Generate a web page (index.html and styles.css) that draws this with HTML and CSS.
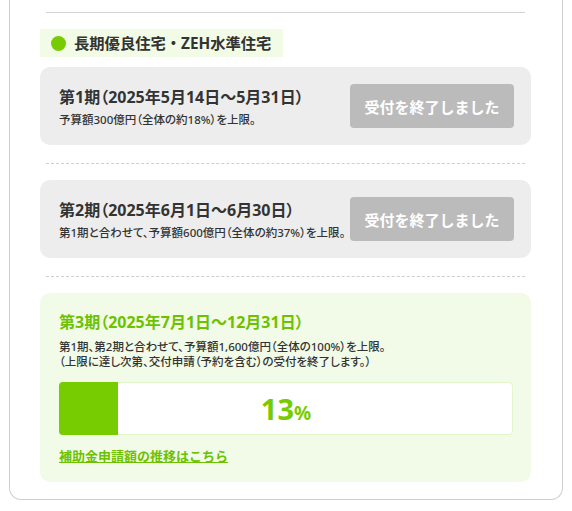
FILE: index.html
```html
<!DOCTYPE html>
<html lang="ja">
<head>
    <meta charset="UTF-8">
    <meta name="viewport" content="width=device-width, initial-scale=1.0">
    <title>補助金 受付状況</title>
    <link rel="stylesheet" href="styles.css">
</head>

<body>
    <div class="page">
        <div class="panel">
            <hr class="rule">

            <div class="label">
                <span class="dot"></span>
                <h2 class="label-text">長期優良住宅・ZEH水準住宅</h2>
            </div>

            <div class="period closed">
                <div class="period-info">
                    <h3 class="period-title">第1期（2025年5月14日〜5月31日）</h3>
                    <p class="period-note">予算額300億円（全体の約18%）を上限。</p>
                </div>
                <span class="status">受付を終了しました</span>
            </div>

            <hr class="dash">

            <div class="period closed">
                <div class="period-info">
                    <h3 class="period-title">第2期（2025年6月1日〜6月30日）</h3>
                    <p class="period-note">第1期と合わせて、予算額600億円（全体の約37%）を上限。</p>
                </div>
                <span class="status">受付を終了しました</span>
            </div>

            <hr class="dash">

            <div class="period current">
                <h3 class="period-title">第3期（2025年7月1日〜12月31日）</h3>
                <p class="period-note">第1期、第2期と合わせて、予算額1,600億円（全体の100%）を上限。<br>（上限に達し次第、交付申請（予約を含む）の受付を終了します。）</p>

                <div class="bar">
                    <div class="bar-fill" style="width: 13%;"></div>
                    <span class="bar-value">13<small>%</small></span>
                </div>

                <a class="more" href="#">補助金申請額の推移はこちら</a>
            </div>
        </div>
    </div>
</body>
</html>
```

FILE: styles.css
```css
body {
    margin: 0;
    background-color: #fff;
    font-family: "Noto Sans", "Noto Sans CJK JP", sans-serif;
    color: #333;
}

.page {
    padding: 0 9px;
}

.panel {
    border: 1px solid #cfcfcf;
    border-top: none;
    border-radius: 0 0 12px 12px;
    padding: 12px 31px 17px 30px;
}

.rule {
    margin: 0 6px;
    border: none;
    border-top: 1px solid #d3d3d3;
}

.label {
    display: inline-flex;
    align-items: center;
    height: 28px;
    margin-top: 16px;
    padding: 0 12px 0 11px;
    background-color: #f2fbe6;
}

.dot {
    width: 15px;
    height: 15px;
    border-radius: 50%;
    background-color: #76cc00;
    margin-right: 8px;
}

.label-text {
    margin: 0;
    font-size: 15.3px;
    font-weight: 700;
    line-height: 22px;
}

.period {
    border-radius: 10px;
}

.closed {
    display: flex;
    align-items: center;
    justify-content: space-between;
    height: 78px;
    padding: 0 17px 0 19px;
    background-color: #ededed;
}

.label + .closed {
    margin-top: 10px;
}

.period-info {
    white-space: nowrap;
}

.period-title {
    margin: 0;
    font-size: 16px;
    font-weight: 700;
    line-height: 22px;
    font-feature-settings: "palt";
}

.period-note {
    margin: 4px 0 0;
    font-size: 11.5px;
    font-weight: 500;
    line-height: 15px;
    font-feature-settings: "palt";
}

.status {
    flex-shrink: 0;
    width: 164px;
    height: 44px;
    display: flex;
    align-items: center;
    justify-content: center;
    background-color: #bbb;
    border-radius: 4px;
    color: #fff;
    font-size: 15px;
    font-weight: 700;
}

.dash {
    margin: 18px 6px 16px;
    border: none;
    border-top: 1px dashed #cfcfcf;
}

.current {
    padding: 18px 18px 16px 19px;
    background-color: #f2fbe7;
}

.current .period-title {
    color: #6cc200;
}

.current .period-note {
    margin-top: 6px;
}

.bar {
    position: relative;
    display: flex;
    align-items: center;
    justify-content: center;
    height: 51px;
    margin-top: 13px;
    background-color: #fff;
    border: 1px solid #e2f5cb;
    border-radius: 4px;
}

.bar-fill {
    position: absolute;
    top: -1px;
    bottom: -1px;
    left: -1px;
    background-color: #76cc00;
    border-radius: 4px 0 0 4px;
}

.bar-value {
    position: relative;
    color: #76cc00;
    font-size: 29px;
    font-weight: 700;
    line-height: 1;
}

.bar-value small {
    font-size: 19px;
}

.more {
    display: inline-block;
    margin-top: 11px;
    color: #6cc200;
    font-size: 13px;
    font-weight: 700;
    line-height: 20px;
}
```
